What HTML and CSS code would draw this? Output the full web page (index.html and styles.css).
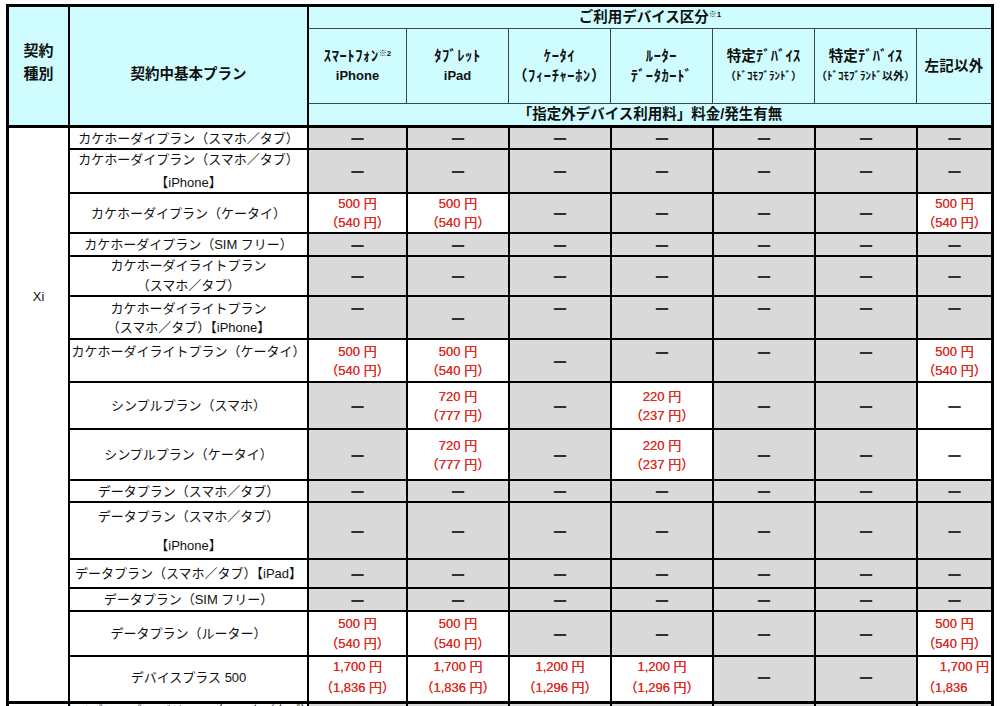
FILE: index.html
```html
<!DOCTYPE html>
<html lang="ja">
<head>
<meta charset="utf-8">
<title>指定外デバイス利用料</title>
<link rel="stylesheet" href="styles.css">
</head>
<body>
<div class="sheet">
  <div class="head">
    <div class="hc kind"><span>契約</span><span>種別</span></div>
    <div class="hc plan-h">契約中基本プラン</div>
    <div class="devhead">
      <div class="hc dh-title"><span>ご利用デバイス区分<sup>※1</sup></span></div>
      <div class="hc dev"><span class="kana">ｽﾏｰﾄﾌｫﾝ<sup>※2</sup></span><span>iPhone</span></div>
      <div class="hc dev"><span class="kana">ﾀﾌﾞﾚｯﾄ</span><span>iPad</span></div>
      <div class="hc dev"><span class="kana">ｹｰﾀｲ</span><span class="kana">（ﾌｨｰﾁｬｰﾎﾝ）</span></div>
      <div class="hc dev"><span class="kana">ﾙｰﾀｰ</span><span class="kana">ﾃﾞｰﾀｶｰﾄﾞ</span></div>
      <div class="hc dev"><span class="big">特定ﾃﾞﾊﾞｲｽ</span><span class="small">（ﾄﾞｺﾓﾌﾞﾗﾝﾄﾞ）</span></div>
      <div class="hc dev"><span class="big">特定ﾃﾞﾊﾞｲｽ</span><span class="small">（ﾄﾞｺﾓﾌﾞﾗﾝﾄﾞ以外）</span></div>
      <div class="hc dev"><span class="big">左記以外</span></div>
      <div class="hc dh-title"><span>「指定外デバイス利用料」料金/発生有無</span></div>
    </div>
  </div>

  <div class="body">
    <div class="c xi">Xi</div>

    <!-- 1 -->
    <div class="c p">カケホーダイプラン（スマホ／タブ）</div>
    <div class="c g d">―</div><div class="c g d">―</div><div class="c g d">―</div><div class="c g d">―</div><div class="c g d">―</div><div class="c g d">―</div><div class="c g d">―</div>

    <!-- 2 -->
    <div class="c p lh23"><span>カケホーダイプラン（スマホ／タブ）</span><span>【iPhone】</span></div>
    <div class="c g d">―</div><div class="c g d">―</div><div class="c g d">―</div><div class="c g d">―</div><div class="c g d">―</div><div class="c g d">―</div><div class="c g d">―</div>

    <!-- 3 -->
    <div class="c p">カケホーダイプラン（ケータイ）</div>
    <div class="c v"><span>500 円</span><span>（540 円）</span></div>
    <div class="c v"><span>500 円</span><span>（540 円）</span></div>
    <div class="c g d">―</div><div class="c g d">―</div><div class="c g d">―</div><div class="c g d">―</div>
    <div class="c v"><span>500 円</span><span>（540 円）</span></div>

    <!-- 4 -->
    <div class="c p">カケホーダイプラン（SIM フリー）</div>
    <div class="c g d">―</div><div class="c g d">―</div><div class="c g d">―</div><div class="c g d">―</div><div class="c g d">―</div><div class="c g d">―</div><div class="c g d">―</div>

    <!-- 5 -->
    <div class="c p lh20"><span>カケホーダイライトプラン</span><span>（スマホ／タブ）</span></div>
    <div class="c g d">―</div><div class="c g d">―</div><div class="c g d">―</div><div class="c g d">―</div><div class="c g d">―</div><div class="c g d">―</div><div class="c g d">―</div>

    <!-- 6 -->
    <div class="c p"><span>カケホーダイライトプラン</span><span>（スマホ／タブ）【iPhone】</span></div>
    <div class="c g d top">―</div><div class="c g d">―</div><div class="c g d top">―</div><div class="c g d top">―</div><div class="c g d top">―</div><div class="c g d top">―</div><div class="c g d top">―</div>

    <!-- 7 -->
    <div class="c p top">カケホーダイライトプラン（ケータイ）</div>
    <div class="c v"><span>500 円</span><span>（540 円）</span></div>
    <div class="c v"><span>500 円</span><span>（540 円）</span></div>
    <div class="c g d">―</div><div class="c g d top2">―</div><div class="c g d top2">―</div><div class="c g d top2">―</div>
    <div class="c v"><span>500 円</span><span>（540 円）</span></div>

    <!-- 8 -->
    <div class="c p">シンプルプラン（スマホ）</div>
    <div class="c g d">―</div>
    <div class="c v"><span>720 円</span><span>（777 円）</span></div>
    <div class="c g d">―</div>
    <div class="c v"><span>220 円</span><span>（237 円）</span></div>
    <div class="c g d">―</div><div class="c g d">―</div>
    <div class="c d">―</div>

    <!-- 9 -->
    <div class="c p">シンプルプラン（ケータイ）</div>
    <div class="c g d">―</div>
    <div class="c v"><span>720 円</span><span>（777 円）</span></div>
    <div class="c g d">―</div>
    <div class="c v"><span>220 円</span><span>（237 円）</span></div>
    <div class="c g d">―</div><div class="c g d">―</div>
    <div class="c d">―</div>

    <!-- 10 -->
    <div class="c p">データプラン（スマホ／タブ）</div>
    <div class="c g d">―</div><div class="c g d">―</div><div class="c g d">―</div><div class="c g d">―</div><div class="c g d">―</div><div class="c g d">―</div><div class="c g d">―</div>

    <!-- 11 -->
    <div class="c p lh29"><span>データプラン（スマホ／タブ）</span><span>【iPhone】</span></div>
    <div class="c g d">―</div><div class="c g d">―</div><div class="c g d">―</div><div class="c g d">―</div><div class="c g d">―</div><div class="c g d">―</div><div class="c g d">―</div>

    <!-- 12 -->
    <div class="c p">データプラン（スマホ／タブ）【iPad】</div>
    <div class="c g d">―</div><div class="c g d">―</div><div class="c g d">―</div><div class="c g d">―</div><div class="c g d">―</div><div class="c g d">―</div><div class="c g d">―</div>

    <!-- 13 -->
    <div class="c p">データプラン（SIM フリー）</div>
    <div class="c g d">―</div><div class="c g d">―</div><div class="c g d">―</div><div class="c g d">―</div><div class="c g d">―</div><div class="c g d">―</div><div class="c g d">―</div>

    <!-- 14 -->
    <div class="c p">データプラン（ルーター）</div>
    <div class="c v lh20"><span>500 円</span><span>（540 円）</span></div>
    <div class="c v lh20"><span>500 円</span><span>（540 円）</span></div>
    <div class="c g d">―</div><div class="c g d">―</div><div class="c g d">―</div><div class="c g d">―</div>
    <div class="c v lh20"><span>500 円</span><span>（540 円）</span></div>

    <!-- 15 -->
    <div class="c p up">デバイスプラス 500</div>
    <div class="c v lh21 up"><span>1,700 円</span><span>（1,836 円）</span></div>
    <div class="c v lh21 up"><span>1,700 円</span><span>（1,836 円）</span></div>
    <div class="c v lh21 up"><span>1,200 円</span><span>（1,296 円）</span></div>
    <div class="c v lh21 up"><span>1,200 円</span><span>（1,296 円）</span></div>
    <div class="c g d up">―</div><div class="c g d up">―</div>
    <div class="c v lh21 up clip"><span class="r">1,700 円</span><span class="l">（1,836</span></div>
  </div>

  <div class="body next">
    <div class="c"></div>
    <div class="c p cut">タイプシンプル バリュー（スマホ／タブ）</div>
    <div class="c g"></div><div class="c g"></div><div class="c g"></div><div class="c g"></div><div class="c g"></div><div class="c g"></div><div class="c g"></div>
  </div>
</div>
</body>
</html>
```

FILE: styles.css
```css
html, body {
  margin: 0;
  padding: 0;
  overflow: hidden;
  background: #fff;
}

body {
  font-family: "Liberation Sans", "Noto Sans CJK JP", sans-serif;
  color: #111;
}

.sheet {
  width: 988px;
  margin: 4px 0 0 6px;
  padding: 3px;
  box-sizing: border-box;
  background: #000;
  display: flex;
  flex-direction: column;
  gap: 3px;
}

/* ---------- header ---------- */
.head {
  display: grid;
  grid-template-columns: 59px 237px 682px;
  grid-template-rows: 118px;
  column-gap: 2px;
}

.hc {
  background: #cffdff;
  display: flex;
  flex-direction: column;
  align-items: center;
  justify-content: center;
  font-weight: 700;
  text-align: center;
  white-space: nowrap;
}

.kind {
  font-size: 15px;
  line-height: 23px;
  padding-bottom: 9px;
}

.plan-h {
  font-size: 14.5px;
  padding-top: 12px;
}

.devhead {
  display: grid;
  grid-template-columns: 97px 101px 101px 101px 101px 101px 74px;
  grid-template-rows: 21px 74px 21px;
  gap: 1px;
  background: #3a4848;
}

.dh-title {
  grid-column: 1 / -1;
  font-size: 14.5px;
  line-height: 21px;
}

.dev {
  font-size: 13px;
  line-height: 20px;
}

.dev .kana {
  font-size: 14.5px;
  letter-spacing: 0.6px;
}

.dev .big {
  font-size: 14.5px;
  letter-spacing: 0.2px;
}

.dev .small {
  font-size: 11px;
}

sup {
  font-size: 8px;
  line-height: 0;
  vertical-align: 5px;
  letter-spacing: 0;
}

/* ---------- body ---------- */
.body {
  display: grid;
  grid-template-columns: 59px 237px 97px 100px 100px 100px 100px 100px 73px;
  grid-template-rows: 20px 42px 38px 21px 38px 41px 41px 45px 49px 20px 55px 27px 21px 43px 44px;
  gap: 2px;
}

.c {
  background: #fff;
  display: flex;
  flex-direction: column;
  align-items: center;
  justify-content: center;
  font-size: 13px;
  line-height: 19px;
  text-align: center;
  white-space: nowrap;
  overflow: hidden;
}

.xi {
  grid-row: span 15;
  justify-content: flex-start;
  padding-top: 159px;
  line-height: 20px;
}

.g {
  background: #d9d9d9;
}

.d {
  font-family: "Noto Sans CJK JP", sans-serif;
  font-size: 14.5px;
  line-height: 14px;
  font-weight: 700;
  color: #000;
  text-shadow: 0 0.7px 0 #000;
}

.v {
  color: #dc2c24;
  text-shadow: 0 0 0.3px #dc2c24;
}

.top {
  justify-content: flex-start;
  padding-top: 2px;
}

.d.top {
  padding-top: 4px;
}

.top2 {
  justify-content: flex-start;
  padding-top: 5px;
}

.up {
  padding-bottom: 4px;
}

.lh20 { line-height: 20px; }
.lh21 { line-height: 21px; }
.lh23 { line-height: 23px; }
.lh29 { line-height: 29px; }

.clip {
  align-items: stretch;
}

.clip .r {
  text-align: right;
  padding-right: 2px;
}

.clip .l {
  text-align: left;
  padding-left: 4px;
}

.next {
  grid-template-rows: 40px;
}

.cut {
  justify-content: flex-start;
  padding-top: 0;
  line-height: 14px;
}
```
